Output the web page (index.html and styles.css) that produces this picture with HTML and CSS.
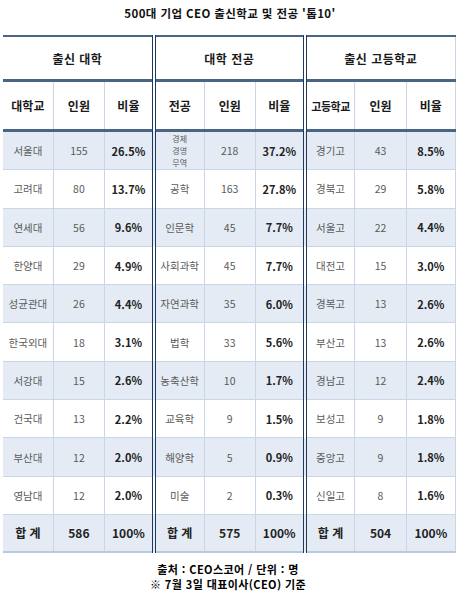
FILE: index.html
```html
<!DOCTYPE html>
<html lang="ko">
<head>
<meta charset="utf-8">
<title>500대 기업 CEO 출신학교 및 전공 톱10</title>
<link rel="stylesheet" href="styles.css">
</head>
<body>
<div class="title">500대 기업 CEO 출신학교 및 전공 '톱10'</div>
<table class="chart-table">
  <colgroup>
    <col class="c1"><col class="c2"><col class="c3">
    <col class="c1"><col class="c2"><col class="c3">
    <col class="c1"><col class="c2"><col class="c3">
  </colgroup>
  <thead>
    <tr class="head-top">
      <th colspan="3" class="first">출신 대학</th>
      <th colspan="3" class="group">대학 전공</th>
      <th colspan="3" class="group">출신 고등학교</th>
    </tr>
    <tr class="head-cols">
      <th class="first">대학교</th><th>인원</th><th>비율</th>
      <th class="group">전공</th><th>인원</th><th>비율</th>
      <th class="group small">고등학교</th><th>인원</th><th>비율</th>
    </tr>
  </thead>
  <tbody>
    <tr class="alt"><td class="first">서울대</td><td>155</td><td class="pct">26.5%</td><td class="group stack">경제<br>경영<br>무역</td><td>218</td><td class="pct">37.2%</td><td class="group">경기고</td><td>43</td><td class="pct">8.5%</td></tr>
    <tr><td class="first">고려대</td><td>80</td><td class="pct">13.7%</td><td class="group">공학</td><td>163</td><td class="pct">27.8%</td><td class="group">경북고</td><td>29</td><td class="pct">5.8%</td></tr>
    <tr class="alt"><td class="first">연세대</td><td>56</td><td class="pct">9.6%</td><td class="group">인문학</td><td>45</td><td class="pct">7.7%</td><td class="group">서울고</td><td>22</td><td class="pct">4.4%</td></tr>
    <tr><td class="first">한양대</td><td>29</td><td class="pct">4.9%</td><td class="group">사회과학</td><td>45</td><td class="pct">7.7%</td><td class="group">대전고</td><td>15</td><td class="pct">3.0%</td></tr>
    <tr class="alt"><td class="first">성균관대</td><td>26</td><td class="pct">4.4%</td><td class="group">자연과학</td><td>35</td><td class="pct">6.0%</td><td class="group">경복고</td><td>13</td><td class="pct">2.6%</td></tr>
    <tr><td class="first">한국외대</td><td>18</td><td class="pct">3.1%</td><td class="group">법학</td><td>33</td><td class="pct">5.6%</td><td class="group">부산고</td><td>13</td><td class="pct">2.6%</td></tr>
    <tr class="alt"><td class="first">서강대</td><td>15</td><td class="pct">2.6%</td><td class="group">농축산학</td><td>10</td><td class="pct">1.7%</td><td class="group">경남고</td><td>12</td><td class="pct">2.4%</td></tr>
    <tr><td class="first">건국대</td><td>13</td><td class="pct">2.2%</td><td class="group">교육학</td><td>9</td><td class="pct">1.5%</td><td class="group">보성고</td><td>9</td><td class="pct">1.8%</td></tr>
    <tr class="alt"><td class="first">부산대</td><td>12</td><td class="pct">2.0%</td><td class="group">해양학</td><td>5</td><td class="pct">0.9%</td><td class="group">중앙고</td><td>9</td><td class="pct">1.8%</td></tr>
    <tr><td class="first">영남대</td><td>12</td><td class="pct">2.0%</td><td class="group">미술</td><td>2</td><td class="pct">0.3%</td><td class="group">신일고</td><td>8</td><td class="pct">1.6%</td></tr>
    <tr class="alt total"><td class="first">합 계</td><td>586</td><td>100%</td><td class="group">합 계</td><td>575</td><td>100%</td><td class="group">합 계</td><td>504</td><td>100%</td></tr>
  </tbody>
</table>
<div class="footer">
  <div>출처 : CEO스코어 / 단위 : 명</div>
  <div>※ 7월 3일 대표이사(CEO) 기준</div>
</div>
</body>
</html>
```

FILE: styles.css
```css
html, body {
  margin: 0;
  padding: 0;
  background: #ffffff;
}

body {
  width: 456px;
  font-family: "Noto Sans CJK KR", "Noto Sans", sans-serif;
  color: #222;
}

.title {
  height: 35px;
  line-height: 26px;
  text-align: center;
  font-size: 11.5px;
  letter-spacing: 0.4px;
  font-weight: bold;
  color: #111;
  padding-left: 4px;
}

.chart-table {
  border-collapse: collapse;
  table-layout: fixed;
  width: 453px;
  margin-left: 3px;
}

.c1 { width: 50px; }
.c2 { width: 51px; }
.c3 { width: 49px; }

.chart-table th,
.chart-table td {
  padding: 0;
  text-align: center;
  vertical-align: middle;
  border-left: 1px solid #c9d6e6;
  border-right: 1px solid #c9d6e6;
}

.chart-table .first {
  border-left: none;
}

.chart-table .group {
  border-left: 4px double #1f3a5e;
}

.head-top th {
  height: 42px;
  border-top: 2px solid #4a6584;
  border-bottom: 3px solid #4a6584;
  font-size: 12px;
  letter-spacing: 0.5px;
  font-weight: bold;
  color: #1a1a1a;
}

.head-cols th {
  height: 47px;
  border-bottom: 3px solid #4a6584;
  font-size: 12px;
  font-weight: bold;
  color: #1a1a1a;
}

.head-cols th.small {
  font-size: 11px;
  letter-spacing: -0.5px;
}

.chart-table tbody td {
  height: 37.3px;
  border-bottom: 1px solid #c9d6e6;
  font-size: 10.5px;
  color: #5a5a5a;
}

.chart-table tbody td.pct {
  font-weight: bold;
  color: #222;
  font-size: 11px;
}

.chart-table tbody td.stack {
  font-size: 8px;
  line-height: 12px;
}

.chart-table tr.alt td {
  background: #e4ebf4;
}

.chart-table tr.total td {
  height: 36px;
  font-size: 12px;
  font-weight: bold;
  color: #222;
  border-bottom: 2px solid #b9c9dc;
}

.footer {
  margin-top: 9px;
  text-align: center;
  font-size: 11px;
  letter-spacing: 0.4px;
  font-weight: bold;
  line-height: 15px;
  color: #000;
}
```
